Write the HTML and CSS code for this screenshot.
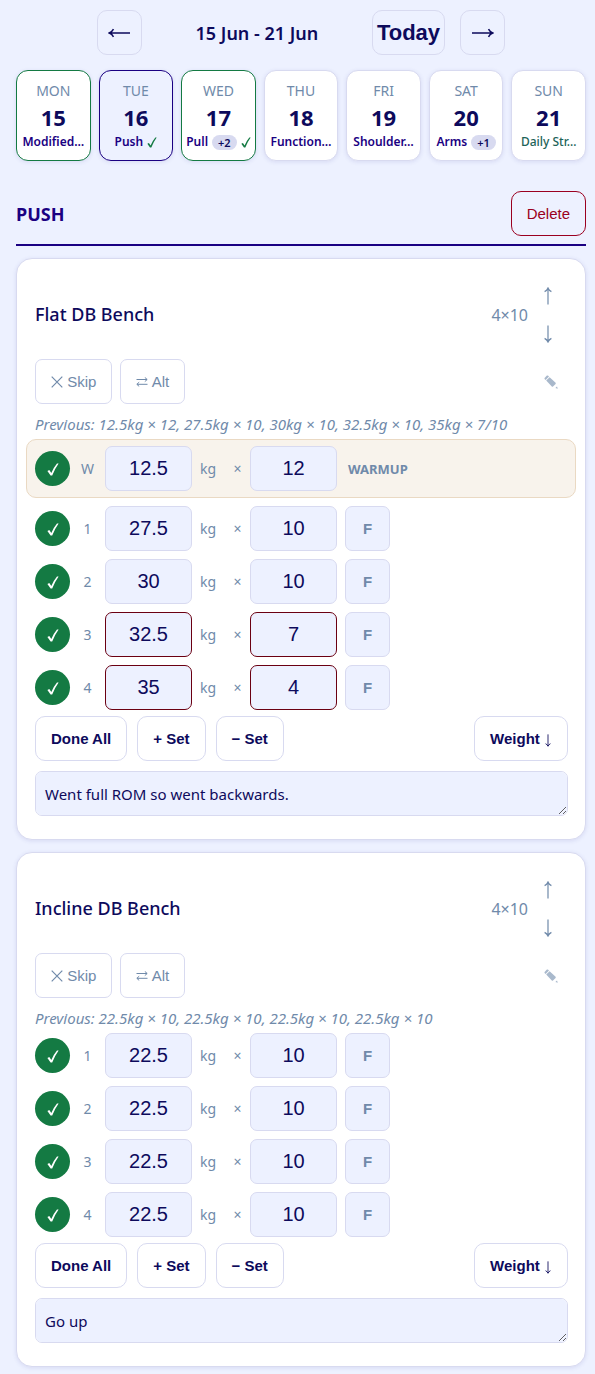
FILE: index.html
```html
<!DOCTYPE html>
<html lang="en">

<head>
    <meta charset="UTF-8">
    <meta name="viewport" content="width=device-width, initial-scale=1.0">
    <title>Workout</title>
    <link rel="stylesheet" href="styles.css">
</head>

<body>
    <svg class="sprite" aria-hidden="true">
        <symbol id="left" viewBox="0 0 22 10"><path d="M22 5H1.5M5.5 1.2Q4 4 1.2 5Q4 6 5.5 8.8" /></symbol>
        <symbol id="right" viewBox="0 0 22 10"><path d="M0 5H20.5M16.5 1.2Q18 4 20.8 5Q18 6 16.5 8.8" /></symbol>
        <symbol id="up" viewBox="0 0 8 18"><path d="M4 17.5V1.5M.6 4.6Q3 3.4 4 1Q5 3.4 7.4 4.6" /></symbol>
        <symbol id="down" viewBox="0 0 8 18"><path d="M4 .5V16.5M.6 13.4Q3 14.6 4 17Q5 14.6 7.4 13.4" /></symbol>
        <symbol id="cross" viewBox="0 0 12 12"><path d="M.7.7L11.3 11.3M11.3.7L.7 11.3" /></symbol>
        <symbol id="swap" viewBox="0 0 12 10"><path d="M.5 2.5H11M8.8.4L11.2 2.5L8.8 4.6M11.5 7.3H1M3.2 5.2L.8 7.3L3.2 9.4" /></symbol>
        <symbol id="tick" viewBox="0 0 12 13"><path d="M.4 8L2.3 7L4.3 10Q6.6 4.4 10 .4L11.6.4Q7.8 5.6 5.2 12.6L3.6 12.6Z" /></symbol>
        <symbol id="pencil" viewBox="0 0 14 14"><path d="M.6 2.9L2.9.6Q3.6.2 4.2.8L5 1.6L1.6 5L.8 4.2Q.2 3.6.6 2.9ZM2.2 5.6L5.6 2.2L11.6 7.8Q12 8.4 11.6 9L9 11.6Q8.4 12 7.8 11.6ZM11.4 13L13 11.4L13.8 13.8Z" /></symbol>
    </svg>

    <header class="week-nav">
        <button class="nav-btn" aria-label="Previous week"><svg class="line h-arrow"><use href="#left" /></svg></button>
        <span class="week-label">15 Jun - 21 Jun</span>
        <button class="nav-btn today">Today</button>
        <button class="nav-btn" aria-label="Next week"><svg class="line h-arrow"><use href="#right" /></svg></button>
    </header>

    <div class="days">
        <div class="day done">
            <span class="day-name">MON</span>
            <span class="day-num">15</span>
            <span class="day-plan">Modified…</span>
        </div>
        <div class="day selected">
            <span class="day-name">TUE</span>
            <span class="day-num">16</span>
            <span class="day-plan">Push <svg class="tick"><use href="#tick" /></svg></span>
        </div>
        <div class="day done">
            <span class="day-name">WED</span>
            <span class="day-num">17</span>
            <span class="day-plan">Pull <span class="more">+2</span> <svg class="tick"><use href="#tick" /></svg></span>
        </div>
        <div class="day">
            <span class="day-name">THU</span>
            <span class="day-num">18</span>
            <span class="day-plan">Function…</span>
        </div>
        <div class="day">
            <span class="day-name">FRI</span>
            <span class="day-num">19</span>
            <span class="day-plan">Shoulder…</span>
        </div>
        <div class="day">
            <span class="day-name">SAT</span>
            <span class="day-num">20</span>
            <span class="day-plan">Arms <span class="more">+1</span></span>
        </div>
        <div class="day">
            <span class="day-name">SUN</span>
            <span class="day-num">21</span>
            <span class="day-plan daily">Daily Str…</span>
        </div>
    </div>

    <main>
        <div class="section-head">
            <h2>PUSH</h2>
            <button class="btn delete">Delete</button>
        </div>

        <section class="card">
            <div class="card-head">
                <h3>Flat DB Bench</h3>
                <span class="target">4×10</span>
                <div class="move">
                    <button aria-label="Move up"><svg class="line v-arrow"><use href="#up" /></svg></button>
                    <button aria-label="Move down"><svg class="line v-arrow"><use href="#down" /></svg></button>
                </div>
            </div>
            <div class="tools">
                <button class="btn muted"><svg class="line cross"><use href="#cross" /></svg> Skip</button>
                <button class="btn muted"><svg class="line swap"><use href="#swap" /></svg> Alt</button>
                <button class="edit" aria-label="Edit"><svg class="pencil"><use href="#pencil" /></svg></button>
            </div>
            <p class="previous">Previous: 12.5kg × 12, 27.5kg × 10, 30kg × 10, 32.5kg × 10, 35kg × 7/10</p>
            <div class="sets">
                <div class="set warmup">
                    <button class="check" aria-label="Done"><svg><use href="#tick" /></svg></button>
                    <span class="num">W</span>
                    <input type="text" value="12.5" aria-label="Weight">
                    <span class="unit">kg</span><span class="times">×</span>
                    <input type="text" value="12" aria-label="Reps">
                    <span class="tag">WARMUP</span>
                </div>
                <div class="set">
                    <button class="check" aria-label="Done"><svg><use href="#tick" /></svg></button>
                    <span class="num">1</span>
                    <input type="text" value="27.5" aria-label="Weight">
                    <span class="unit">kg</span><span class="times">×</span>
                    <input type="text" value="10" aria-label="Reps">
                    <button class="fail">F</button>
                </div>
                <div class="set">
                    <button class="check" aria-label="Done"><svg><use href="#tick" /></svg></button>
                    <span class="num">2</span>
                    <input type="text" value="30" aria-label="Weight">
                    <span class="unit">kg</span><span class="times">×</span>
                    <input type="text" value="10" aria-label="Reps">
                    <button class="fail">F</button>
                </div>
                <div class="set missed">
                    <button class="check" aria-label="Done"><svg><use href="#tick" /></svg></button>
                    <span class="num">3</span>
                    <input type="text" value="32.5" aria-label="Weight">
                    <span class="unit">kg</span><span class="times">×</span>
                    <input type="text" value="7" aria-label="Reps">
                    <button class="fail">F</button>
                </div>
                <div class="set missed">
                    <button class="check" aria-label="Done"><svg><use href="#tick" /></svg></button>
                    <span class="num">4</span>
                    <input type="text" value="35" aria-label="Weight">
                    <span class="unit">kg</span><span class="times">×</span>
                    <input type="text" value="4" aria-label="Reps">
                    <button class="fail">F</button>
                </div>
            </div>
            <div class="actions">
                <button class="btn bold">Done All</button>
                <button class="btn bold">+ Set</button>
                <button class="btn bold">− Set</button>
                <button class="btn bold weight">Weight <svg class="line small-arrow"><use href="#down" /></svg></button>
            </div>
            <textarea class="notes" rows="1" aria-label="Notes">Went full ROM so went backwards.</textarea>
        </section>

        <section class="card">
            <div class="card-head">
                <h3>Incline DB Bench</h3>
                <span class="target">4×10</span>
                <div class="move">
                    <button aria-label="Move up"><svg class="line v-arrow"><use href="#up" /></svg></button>
                    <button aria-label="Move down"><svg class="line v-arrow"><use href="#down" /></svg></button>
                </div>
            </div>
            <div class="tools">
                <button class="btn muted"><svg class="line cross"><use href="#cross" /></svg> Skip</button>
                <button class="btn muted"><svg class="line swap"><use href="#swap" /></svg> Alt</button>
                <button class="edit" aria-label="Edit"><svg class="pencil"><use href="#pencil" /></svg></button>
            </div>
            <p class="previous">Previous: 22.5kg × 10, 22.5kg × 10, 22.5kg × 10, 22.5kg × 10</p>
            <div class="sets">
                <div class="set">
                    <button class="check" aria-label="Done"><svg><use href="#tick" /></svg></button>
                    <span class="num">1</span>
                    <input type="text" value="22.5" aria-label="Weight">
                    <span class="unit">kg</span><span class="times">×</span>
                    <input type="text" value="10" aria-label="Reps">
                    <button class="fail">F</button>
                </div>
                <div class="set">
                    <button class="check" aria-label="Done"><svg><use href="#tick" /></svg></button>
                    <span class="num">2</span>
                    <input type="text" value="22.5" aria-label="Weight">
                    <span class="unit">kg</span><span class="times">×</span>
                    <input type="text" value="10" aria-label="Reps">
                    <button class="fail">F</button>
                </div>
                <div class="set">
                    <button class="check" aria-label="Done"><svg><use href="#tick" /></svg></button>
                    <span class="num">3</span>
                    <input type="text" value="22.5" aria-label="Weight">
                    <span class="unit">kg</span><span class="times">×</span>
                    <input type="text" value="10" aria-label="Reps">
                    <button class="fail">F</button>
                </div>
                <div class="set">
                    <button class="check" aria-label="Done"><svg><use href="#tick" /></svg></button>
                    <span class="num">4</span>
                    <input type="text" value="22.5" aria-label="Weight">
                    <span class="unit">kg</span><span class="times">×</span>
                    <input type="text" value="10" aria-label="Reps">
                    <button class="fail">F</button>
                </div>
            </div>
            <div class="actions">
                <button class="btn bold">Done All</button>
                <button class="btn bold">+ Set</button>
                <button class="btn bold">− Set</button>
                <button class="btn bold weight">Weight <svg class="line small-arrow"><use href="#down" /></svg></button>
            </div>
            <textarea class="notes" rows="1" aria-label="Notes">Go up</textarea>
        </section>
    </main>
</body>

</html>
```
FILE: styles.css
```css
:root {
    --bg: #edf1ff;
    --text: #0d0a5c;
    --accent: #1a0082;
    --muted: #708aaa;
    --border: #d8daf0;
    --green: #147a43;
    --shadow: 0 1px 4px rgba(60, 60, 160, 0.12);
}

* {
    box-sizing: border-box;
}

body {
    margin: 0;
    padding: 10px 9px 7px 16px;
    background: var(--bg);
    color: var(--text);
    font-family: "Noto Sans", sans-serif;
    font-size: 15px;
    line-height: 20px;
}

.sprite {
    position: absolute;
    width: 0;
    height: 0;
}

button,
input {
    font-family: "Liberation Sans", sans-serif;
    color: inherit;
    cursor: pointer;
}

svg {
    fill: currentColor;
}

.line {
    fill: none;
    stroke: currentColor;
    stroke-width: 1.2;
}

/* week navigation */
.week-nav {
    display: flex;
    justify-content: center;
    align-items: center;
    gap: 15px;
    margin-bottom: 15px;
}

.nav-btn {
    display: flex;
    align-items: center;
    justify-content: center;
    min-width: 45px;
    height: 45px;
    padding: 0 4px;
    border: 1px solid var(--border);
    border-radius: 10px;
    background: none;
}

.today {
    font-size: 22px;
    font-weight: bold;
}

.h-arrow {
    width: 22px;
    height: 10px;
    stroke-width: 1.5;
}

.week-label {
    width: 200px;
    text-align: center;
    font-size: 18px;
    font-weight: 600;
}

.days {
    display: grid;
    grid-template-columns: repeat(7, minmax(0, 1fr));
    gap: 8px;
    margin-bottom: 30px;
}

.day {
    display: flex;
    flex-direction: column;
    align-items: center;
    height: 91px;
    padding-top: 10px;
    border: 1px solid var(--border);
    border-radius: 12px;
    background: #fff;
    box-shadow: var(--shadow);
}

.done {
    border-color: var(--green);
}

.selected {
    border-color: var(--accent);
    background: var(--bg);
}

.day-name {
    font-size: 14px;
    color: var(--muted);
}

.day-num {
    font-size: 22px;
    line-height: 33px;
    font-weight: 700;
}

.day-plan {
    display: flex;
    align-items: center;
    gap: 4px;
    font-size: 12px;
    line-height: 16px;
    font-weight: 600;
    color: var(--accent);
    white-space: nowrap;
}

.daily {
    font-weight: 500;
    color: #1c6358;
}

.more {
    padding: 0 6px;
    border-radius: 8px;
    background: var(--border);
    color: var(--text);
    font-size: 11px;
    line-height: 15px;
}

.tick {
    width: 10px;
    height: 11px;
    color: var(--green);
}

/* workout */
.section-head {
    display: flex;
    justify-content: space-between;
    align-items: center;
    margin-bottom: 12px;
    padding-bottom: 8px;
    border-bottom: 2px solid var(--accent);
}

h2 {
    margin: 0;
    font-size: 18px;
    font-weight: 700;
    color: var(--accent);
}

.btn {
    height: 45px;
    padding: 0 15px;
    border: 1px solid var(--border);
    border-radius: 10px;
    background: none;
    font-size: 15px;
}

.delete {
    border-color: #9b0020;
    color: #9b0020;
}

.card {
    margin-bottom: 12px;
    padding: 18px 17px 23px 18px;
    border: 1px solid var(--border);
    border-radius: 16px;
    background: #fff;
    box-shadow: var(--shadow);
}

.card:last-child {
    margin-bottom: 0;
}

.card-head {
    display: flex;
    align-items: center;
    margin-bottom: 6px;
}

h3 {
    flex: 1;
    margin: 0;
    padding-bottom: 3px;
    font-size: 18px;
    font-weight: 500;
}

.target {
    font-size: 16px;
    color: var(--muted);
}

.move {
    display: flex;
    flex-direction: column;
    width: 40px;
}

.move button,
.edit {
    display: flex;
    align-items: center;
    justify-content: center;
    height: 38px;
    padding: 0;
    border: none;
    background: none;
    color: var(--muted);
}

.v-arrow {
    width: 8px;
    height: 18px;
}

.tools {
    display: flex;
    align-items: center;
    gap: 8px;
}

.muted {
    border-radius: 7px;
    color: var(--muted);
}

.cross {
    width: 12px;
    height: 12px;
    vertical-align: -1px;
}

.swap {
    width: 12px;
    height: 10px;
    stroke-width: 1;
}

.edit {
    width: 34px;
    margin-left: auto;
}

.pencil {
    width: 14px;
    height: 14px;
    opacity: 0.6;
}

.previous {
    margin: 9px 0 4px;
    line-height: 22px;
    font-size: 15px;
    font-style: italic;
    color: var(--muted);
}

.sets {
    display: grid;
    gap: 8px;
}

.set {
    display: flex;
    align-items: center;
    gap: 8px;
}

.warmup {
    height: 59px;
    margin: 0 -8px 0 -9px;
    padding: 0 8px;
    border: 1px solid #ead9c3;
    border-radius: 10px;
    background: #f8f3ec;
}

.check {
    display: flex;
    align-items: center;
    justify-content: center;
    width: 35px;
    height: 35px;
    padding: 2px 0 0;
    border: none;
    border-radius: 50%;
    background: var(--green);
    color: #fff;
}

.check svg {
    width: 12px;
    height: 13px;
}

.num {
    width: 19px;
    text-align: center;
    font-size: 14px;
    color: var(--muted);
}

.set input {
    width: 87px;
    height: 45px;
    border: 1px solid var(--border);
    border-radius: 7px;
    background: var(--bg);
    font-size: 20px;
    text-align: center;
}

.set.missed input {
    border-color: #6b0012;
}

.unit {
    width: 25px;
    font-size: 14px;
    color: var(--muted);
}

.times {
    width: 9px;
    text-align: center;
    font-size: 14px;
    color: var(--muted);
}

.tag {
    padding-left: 3px;
    font-size: 13px;
    font-weight: 700;
    color: var(--muted);
}

.fail {
    width: 45px;
    height: 45px;
    border: 1px solid var(--border);
    border-radius: 7px;
    background: var(--bg);
    color: var(--muted);
    font-size: 15px;
    font-weight: bold;
}

.actions {
    display: flex;
    gap: 10px;
    margin: 6px 0 10px;
}

.bold {
    font-weight: bold;
}

.weight {
    margin-left: auto;
}

.small-arrow {
    width: 8px;
    height: 13px;
    vertical-align: -3px;
}

.notes {
    display: block;
    width: 100%;
    height: 45px;
    padding: 12px 9px;
    border: 1px solid var(--border);
    border-radius: 7px;
    background: var(--bg);
    color: var(--text);
    font-family: inherit;
    font-size: 15px;
    line-height: 20px;
    resize: vertical;
}
```
